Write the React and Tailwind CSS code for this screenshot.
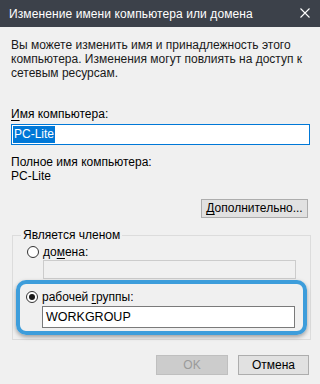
export default function App() {
    return (
        <div className="w-[320px] h-[384px] bg-[#f0f0f0] flex flex-col overflow-hidden text-black" style={{ fontFamily: '"Liberation Sans", Arial, sans-serif' }}>
            {/* Title bar */}
            <div className="h-[27px] bg-[#3c414a] flex items-center justify-between pl-[9px] pr-[10px]">
                <span className="text-[12px] text-white whitespace-nowrap tracking-[0.1px]">Изменение имени компьютера или домена</span>
                <svg width="10" height="10" viewBox="0 0 10 10" className="mb-[2px]">
                    <path d="M0.5 0.5 L9.5 9.5 M9.5 0.5 L0.5 9.5" stroke="#ffffff" strokeWidth="1.1" />
                </svg>
            </div>

            {/* Content */}
            <div className="flex flex-col px-[11px] pt-[11px] text-[12px] leading-[14px]">
                <p className="text-[#1a1a1a] whitespace-nowrap">
                    Вы можете изменить имя и принадлежность этого<br />
                    компьютера. Изменения могут повлиять на доступ к<br />
                    сетевым ресурсам.
                </p>

                <label className="mt-[27px]"><span className="underline underline-offset-2">И</span>мя компьютера:</label>
                <div className="mt-[3px] h-[21px] w-[299px] border border-[#0078d7] bg-white flex items-center px-[1px]">
                    <span className="bg-[#0078d7] text-white h-[17px] leading-[17px] px-[1px]">PC-Lite</span>
                </div>

                <div className="mt-[10px]">Полное имя компьютера:</div>
                <div>PC-Lite</div>

                <div className="flex justify-end mt-[16px] pr-[1px]">
                    <button className="w-[107px] h-[19px] bg-[#e1e1e1] border border-[#adadad] text-[12px] leading-[17px]">
                        <span className="underline underline-offset-2">Д</span>ополнительно...
                    </button>
                </div>

                {/* Member of group */}
                <fieldset className="mt-[10px] ml-[1px] w-[299px] border border-[#dcdcdc] pb-[4px] px-[3px]">
                    <legend className="ml-[5px] px-[2px]">Является членом</legend>
                    <div className="flex items-center gap-[4px] ml-[11px] mt-[3px]">
                        <span className="w-[12px] h-[12px] rounded-full border border-[#333] bg-white" />
                        <span>до<span className="underline underline-offset-2">м</span>ена:</span>
                    </div>
                    <div className="ml-[27px] mt-[1px] w-[253px] h-[19px] border border-[#cccccc] bg-[#f0f0f0]" />

                    <div className="mt-[1px] rounded-[10px] border-[4px] border-[#3d9ddb] shadow-[0_2px_4px_rgba(0,0,0,0.35)] pt-[6px] pb-[3px] pl-[6px] pr-[8px]">
                        <div className="flex items-center gap-[4px]">
                            <span className="w-[12px] h-[12px] rounded-full border border-[#333] bg-white flex items-center justify-center">
                                <span className="w-[6px] h-[6px] rounded-full bg-[#1a1a1a]" />
                            </span>
                            <span>рабочей <span className="underline underline-offset-2">г</span>руппы:</span>
                        </div>
                        <div className="ml-[16px] mt-[2px] h-[22px] border border-[#7a7a7a] bg-white flex items-center px-[3px] text-[12.5px]">
                            WORKGROUP
                        </div>
                    </div>
                </fieldset>

                <div className="flex justify-end gap-[10px] mt-[15px]">
                    <button disabled className="w-[72px] h-[20px] bg-[#cccccc] border border-[#bfbfbf] text-[#9a9a9a] text-[12px] leading-[18px]">OK</button>
                    <button className="w-[71px] h-[20px] bg-[#e1e1e1] border border-[#adadad] text-[12px] leading-[18px]">Отмена</button>
                </div>
            </div>
        </div>
    );
}
